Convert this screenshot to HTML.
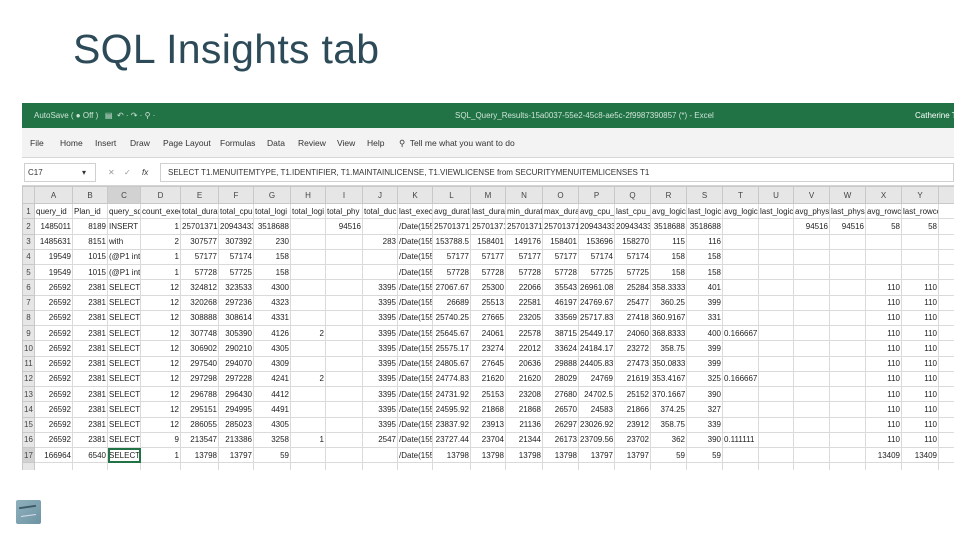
<!DOCTYPE html>
<html><head><meta charset="utf-8"><style>
*{margin:0;padding:0;box-sizing:border-box}
body{width:960px;height:540px;background:#fff;position:relative;overflow:hidden;font-family:"Liberation Sans",sans-serif}
.title{position:absolute;left:73px;top:26px;font-size:41px;color:#2c4a57;letter-spacing:0.3px}
.shot{position:absolute;left:22px;top:103px;width:932px;height:367px;background:#fff;overflow:hidden}
.bar{position:absolute;left:0;top:0;width:932px;height:25px;background:#217346;color:#cfe3d6;font-size:8px;white-space:nowrap}
.bar span{position:absolute;top:8px}
.rib{position:absolute;left:0;top:25px;width:932px;height:30px;background:#f3f3f3;border-bottom:1px solid #d6d6d6;font-size:8.5px;color:#333;white-space:nowrap}
.rib span{position:absolute;top:10px}
.fb{position:absolute;left:0;top:56px;width:932px;height:27px;background:#fff;border-bottom:1px solid #d4d4d4;font-size:8px;color:#333;white-space:nowrap}
.fb span{position:absolute;top:9px}
table{position:absolute;left:0;top:83px;width:934px;border-collapse:collapse;table-layout:fixed;font-size:8px;color:#222}
td{height:15.25px;border:1px solid #dadada;white-space:nowrap;overflow:hidden;padding:0 1px;text-align:right;line-height:13px}
tr.h td{height:17px;background:#e6e6e6;text-align:center;color:#444;border-color:#c8c8c8}
td.n{background:#e6e6e6;text-align:center;color:#444;border-color:#c8c8c8;padding:0}
td.l{text-align:left}
tr.h td.sel{background:#d2d2d2}
td.cur{outline:2px solid #217346;outline-offset:-2px}
.icon{position:absolute;left:16px;top:500px;width:25px;height:24px;background:linear-gradient(135deg,#8fb0bd,#6d94a3);border-radius:2px}
.icon:before{content:"";position:absolute;left:3px;top:6px;width:17px;height:2px;background:#3d5a66;transform:rotate(-8deg)}
.icon:after{content:"";position:absolute;left:5px;top:15px;width:15px;height:1px;background:#dde;transform:rotate(-8deg)}
</style></head><body>
<div class="title">SQL Insights tab</div>
<div class="shot">
<div class="bar"><span style="left:12px">AutoSave ( ● Off )&nbsp;&nbsp; ▤ &nbsp;↶ · ↷ · ⚲ ·</span><span style="left:433px">SQL_Query_Results-15a0037-55e2-45c8-ae5c-2f9987390857 (*) - Excel</span><span style="left:893px;color:#fff">Catherine Th</span></div>
<div class="rib"><span style="left:8px">File</span><span style="left:38px">Home</span><span style="left:73px">Insert</span><span style="left:108px">Draw</span><span style="left:141px">Page Layout</span><span style="left:198px">Formulas</span><span style="left:245px">Data</span><span style="left:276px">Review</span><span style="left:315px">View</span><span style="left:345px">Help</span><span style="left:377px">⚲&nbsp; Tell me what you want to do</span></div>
<div class="fb"><div style="position:absolute;left:2px;top:4px;width:72px;height:19px;border:1px solid #d0d0d0"></div><span style="left:6px">C17</span><span style="left:60px">▾</span><span style="left:86px;color:#999">✕</span><span style="left:102px;color:#999">✓</span><span style="left:120px;font-style:italic">fx</span><div style="position:absolute;left:138px;top:4px;width:794px;height:19px;border:1px solid #d0d0d0"></div><span style="left:146px">SELECT T1.MENUITEMTYPE, T1.IDENTIFIER, T1.MAINTAINLICENSE, T1.VIEWLICENSE from SECURITYMENUITEMLICENSES T1</span></div>
<table>
<colgroup><col style="width:12px"><col style="width:38px"><col style="width:35px"><col style="width:33px"><col style="width:40px"><col style="width:38px"><col style="width:35px"><col style="width:37px"><col style="width:35px"><col style="width:37px"><col style="width:35px"><col style="width:35px"><col style="width:38px"><col style="width:35px"><col style="width:37px"><col style="width:36px"><col style="width:36px"><col style="width:36px"><col style="width:36px"><col style="width:36px"><col style="width:36px"><col style="width:35px"><col style="width:36px"><col style="width:36px"><col style="width:36px"><col style="width:37px"><col style="width:18px"></colgroup>
<tr class="h"><td></td><td>A</td><td>B</td><td class="sel">C</td><td>D</td><td>E</td><td>F</td><td>G</td><td>H</td><td>I</td><td>J</td><td>K</td><td>L</td><td>M</td><td>N</td><td>O</td><td>P</td><td>Q</td><td>R</td><td>S</td><td>T</td><td>U</td><td>V</td><td>W</td><td>X</td><td>Y</td><td></td></tr>
<tr><td class="n">1</td><td class="l">query_id</td><td class="l">Plan_id</td><td class="l">query_sql</td><td class="l">count_exec</td><td class="l">total_durat</td><td class="l">total_cpu</td><td class="l">total_logi</td><td class="l">total_logi</td><td class="l">total_phy</td><td class="l">total_duc</td><td class="l">last_exec</td><td class="l">avg_durat</td><td class="l">last_durat</td><td class="l">min_durat</td><td class="l">max_dura</td><td class="l">avg_cpu_t</td><td class="l">last_cpu_t</td><td class="l">avg_logic</td><td class="l">last_logic</td><td class="l">avg_logic</td><td class="l">last_logic</td><td class="l">avg_phys</td><td class="l">last_phys</td><td class="l">avg_rowc</td><td class="l">last_rowcount</td><td></td></tr>
<tr><td class="n">2</td><td>1485011</td><td>8189</td><td class="l">INSERT</td><td>1</td><td>25701371</td><td>20943433</td><td>3518688</td><td></td><td>94516</td><td></td><td class="l">/Date(155</td><td>25701371</td><td>25701371</td><td>25701371</td><td>25701371</td><td>20943433</td><td>20943433</td><td>3518688</td><td>3518688</td><td></td><td></td><td>94516</td><td>94516</td><td>58</td><td>58</td><td></td></tr>
<tr><td class="n">3</td><td>1485631</td><td>8151</td><td class="l">with</td><td>2</td><td>307577</td><td>307392</td><td>230</td><td></td><td></td><td>283</td><td class="l">/Date(155</td><td>153788.5</td><td>158401</td><td>149176</td><td>158401</td><td>153696</td><td>158270</td><td>115</td><td>116</td><td></td><td></td><td></td><td></td><td></td><td></td><td></td></tr>
<tr><td class="n">4</td><td>19549</td><td>1015</td><td class="l">(@P1 int)(</td><td>1</td><td>57177</td><td>57174</td><td>158</td><td></td><td></td><td></td><td class="l">/Date(155</td><td>57177</td><td>57177</td><td>57177</td><td>57177</td><td>57174</td><td>57174</td><td>158</td><td>158</td><td></td><td></td><td></td><td></td><td></td><td></td><td></td></tr>
<tr><td class="n">5</td><td>19549</td><td>1015</td><td class="l">(@P1 int)(</td><td>1</td><td>57728</td><td>57725</td><td>158</td><td></td><td></td><td></td><td class="l">/Date(155</td><td>57728</td><td>57728</td><td>57728</td><td>57728</td><td>57725</td><td>57725</td><td>158</td><td>158</td><td></td><td></td><td></td><td></td><td></td><td></td><td></td></tr>
<tr><td class="n">6</td><td>26592</td><td>2381</td><td class="l">SELECT</td><td>12</td><td>324812</td><td>323533</td><td>4300</td><td></td><td></td><td>3395</td><td class="l">/Date(155</td><td>27067.67</td><td>25300</td><td>22066</td><td>35543</td><td>26961.08</td><td>25284</td><td>358.3333</td><td>401</td><td></td><td></td><td></td><td></td><td>110</td><td>110</td><td></td></tr>
<tr><td class="n">7</td><td>26592</td><td>2381</td><td class="l">SELECT</td><td>12</td><td>320268</td><td>297236</td><td>4323</td><td></td><td></td><td>3395</td><td class="l">/Date(155</td><td>26689</td><td>25513</td><td>22581</td><td>46197</td><td>24769.67</td><td>25477</td><td>360.25</td><td>399</td><td></td><td></td><td></td><td></td><td>110</td><td>110</td><td></td></tr>
<tr><td class="n">8</td><td>26592</td><td>2381</td><td class="l">SELECT</td><td>12</td><td>308888</td><td>308614</td><td>4331</td><td></td><td></td><td>3395</td><td class="l">/Date(155</td><td>25740.25</td><td>27665</td><td>23205</td><td>33569</td><td>25717.83</td><td>27418</td><td>360.9167</td><td>331</td><td></td><td></td><td></td><td></td><td>110</td><td>110</td><td></td></tr>
<tr><td class="n">9</td><td>26592</td><td>2381</td><td class="l">SELECT</td><td>12</td><td>307748</td><td>305390</td><td>4126</td><td>2</td><td></td><td>3395</td><td class="l">/Date(155</td><td>25645.67</td><td>24061</td><td>22578</td><td>38715</td><td>25449.17</td><td>24060</td><td>368.8333</td><td>400</td><td class="l">0.166667</td><td></td><td></td><td></td><td>110</td><td>110</td><td></td></tr>
<tr><td class="n">10</td><td>26592</td><td>2381</td><td class="l">SELECT</td><td>12</td><td>306902</td><td>290210</td><td>4305</td><td></td><td></td><td>3395</td><td class="l">/Date(155</td><td>25575.17</td><td>23274</td><td>22012</td><td>33624</td><td>24184.17</td><td>23272</td><td>358.75</td><td>399</td><td></td><td></td><td></td><td></td><td>110</td><td>110</td><td></td></tr>
<tr><td class="n">11</td><td>26592</td><td>2381</td><td class="l">SELECT</td><td>12</td><td>297540</td><td>294070</td><td>4309</td><td></td><td></td><td>3395</td><td class="l">/Date(155</td><td>24805.67</td><td>27645</td><td>20636</td><td>29888</td><td>24405.83</td><td>27473</td><td>350.0833</td><td>399</td><td></td><td></td><td></td><td></td><td>110</td><td>110</td><td></td></tr>
<tr><td class="n">12</td><td>26592</td><td>2381</td><td class="l">SELECT</td><td>12</td><td>297298</td><td>297228</td><td>4241</td><td>2</td><td></td><td>3395</td><td class="l">/Date(155</td><td>24774.83</td><td>21620</td><td>21620</td><td>28029</td><td>24769</td><td>21619</td><td>353.4167</td><td>325</td><td class="l">0.166667</td><td></td><td></td><td></td><td>110</td><td>110</td><td></td></tr>
<tr><td class="n">13</td><td>26592</td><td>2381</td><td class="l">SELECT</td><td>12</td><td>296788</td><td>296430</td><td>4412</td><td></td><td></td><td>3395</td><td class="l">/Date(155</td><td>24731.92</td><td>25153</td><td>23208</td><td>27680</td><td>24702.5</td><td>25152</td><td>370.1667</td><td>390</td><td></td><td></td><td></td><td></td><td>110</td><td>110</td><td></td></tr>
<tr><td class="n">14</td><td>26592</td><td>2381</td><td class="l">SELECT</td><td>12</td><td>295151</td><td>294995</td><td>4491</td><td></td><td></td><td>3395</td><td class="l">/Date(155</td><td>24595.92</td><td>21868</td><td>21868</td><td>26570</td><td>24583</td><td>21866</td><td>374.25</td><td>327</td><td></td><td></td><td></td><td></td><td>110</td><td>110</td><td></td></tr>
<tr><td class="n">15</td><td>26592</td><td>2381</td><td class="l">SELECT</td><td>12</td><td>286055</td><td>285023</td><td>4305</td><td></td><td></td><td>3395</td><td class="l">/Date(155</td><td>23837.92</td><td>23913</td><td>21136</td><td>26297</td><td>23026.92</td><td>23912</td><td>358.75</td><td>339</td><td></td><td></td><td></td><td></td><td>110</td><td>110</td><td></td></tr>
<tr><td class="n">16</td><td>26592</td><td>2381</td><td class="l">SELECT</td><td>9</td><td>213547</td><td>213386</td><td>3258</td><td>1</td><td></td><td>2547</td><td class="l">/Date(155</td><td>23727.44</td><td>23704</td><td>21344</td><td>26173</td><td>23709.56</td><td>23702</td><td>362</td><td>390</td><td class="l">0.111111</td><td></td><td></td><td></td><td>110</td><td>110</td><td></td></tr>
<tr><td class="n" style="background:#d2d2d2">17</td><td>166964</td><td>6540</td><td class="l cur">SELECT T1</td><td>1</td><td>13798</td><td>13797</td><td>59</td><td></td><td></td><td></td><td class="l">/Date(155</td><td>13798</td><td>13798</td><td>13798</td><td>13798</td><td>13797</td><td>13797</td><td>59</td><td>59</td><td></td><td></td><td></td><td></td><td>13409</td><td>13409</td><td></td></tr>
<tr><td class="n"></td><td></td><td></td><td></td><td></td><td></td><td></td><td></td><td></td><td></td><td></td><td></td><td></td><td></td><td></td><td></td><td></td><td></td><td></td><td></td><td></td><td></td><td></td><td></td><td></td><td></td><td></td></tr>
</table>
</div>
<div class="icon"></div>
</body></html>
